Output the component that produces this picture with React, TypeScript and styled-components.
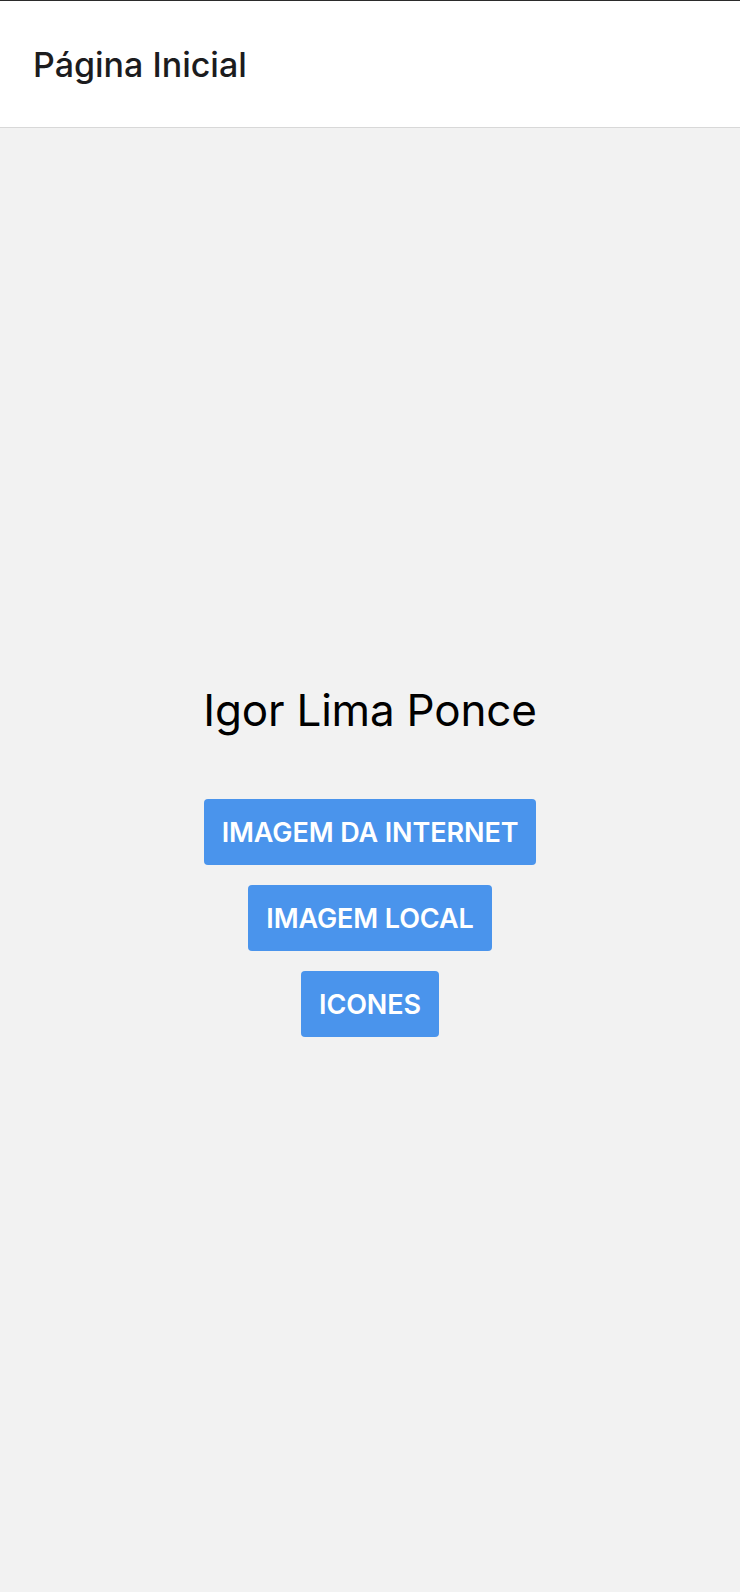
import React from "react";
import styled, { createGlobalStyle } from "styled-components";

const Global = createGlobalStyle`
  html, body { margin: 0; padding: 0; background: #f2f2f2; }
  body { font-family: Inter, "Noto Sans", Roboto, sans-serif; }
  * { box-sizing: border-box; }
`;

const Screen = styled.div`
  min-height: 1592px;
  display: flex;
  flex-direction: column;
  background: #f2f2f2;
`;

const Header = styled.header`
  height: 128px;
  background: #ffffff;
  border-top: 1px solid #2b2b2b;
  border-bottom: 1px solid #d8d8d8;
  display: flex;
  align-items: center;
  padding-left: 33px;
`;

const HeaderTitle = styled.h1`
  margin: 0;
  font-size: 34px;
  font-weight: 500;
  color: #1c1c1e;
`;

const Main = styled.main`
  flex: 1;
  display: flex;
  flex-direction: column;
  align-items: center;
  justify-content: center;
`;

const Name = styled.h2`
  margin: 0 0 62px;
  font-size: 44px;
  font-weight: 400;
  letter-spacing: -0.2px;
  color: #000;
  line-height: 54px;
`;

const Buttons = styled.div`
  display: flex;
  flex-direction: column;
  align-items: center;
  gap: 20px;
`;

const Button = styled.button`
  height: 66px;
  padding: 0 18px;
  border: none;
  border-radius: 4px;
  background: #4a94ec;
  color: #fff;
  font-family: inherit;
  font-size: 27px;
  font-weight: 600;
  letter-spacing: -0.1px;
  cursor: pointer;
`;

export default function App() {
  return (
    <>
      <Global />
      <Screen>
        <Header>
          <HeaderTitle>Página Inicial</HeaderTitle>
        </Header>
        <Main>
          <Name>Igor Lima Ponce</Name>
          <Buttons>
            <Button>IMAGEM DA INTERNET</Button>
            <Button>IMAGEM LOCAL</Button>
            <Button>ICONES</Button>
          </Buttons>
        </Main>
      </Screen>
    </>
  );
}
